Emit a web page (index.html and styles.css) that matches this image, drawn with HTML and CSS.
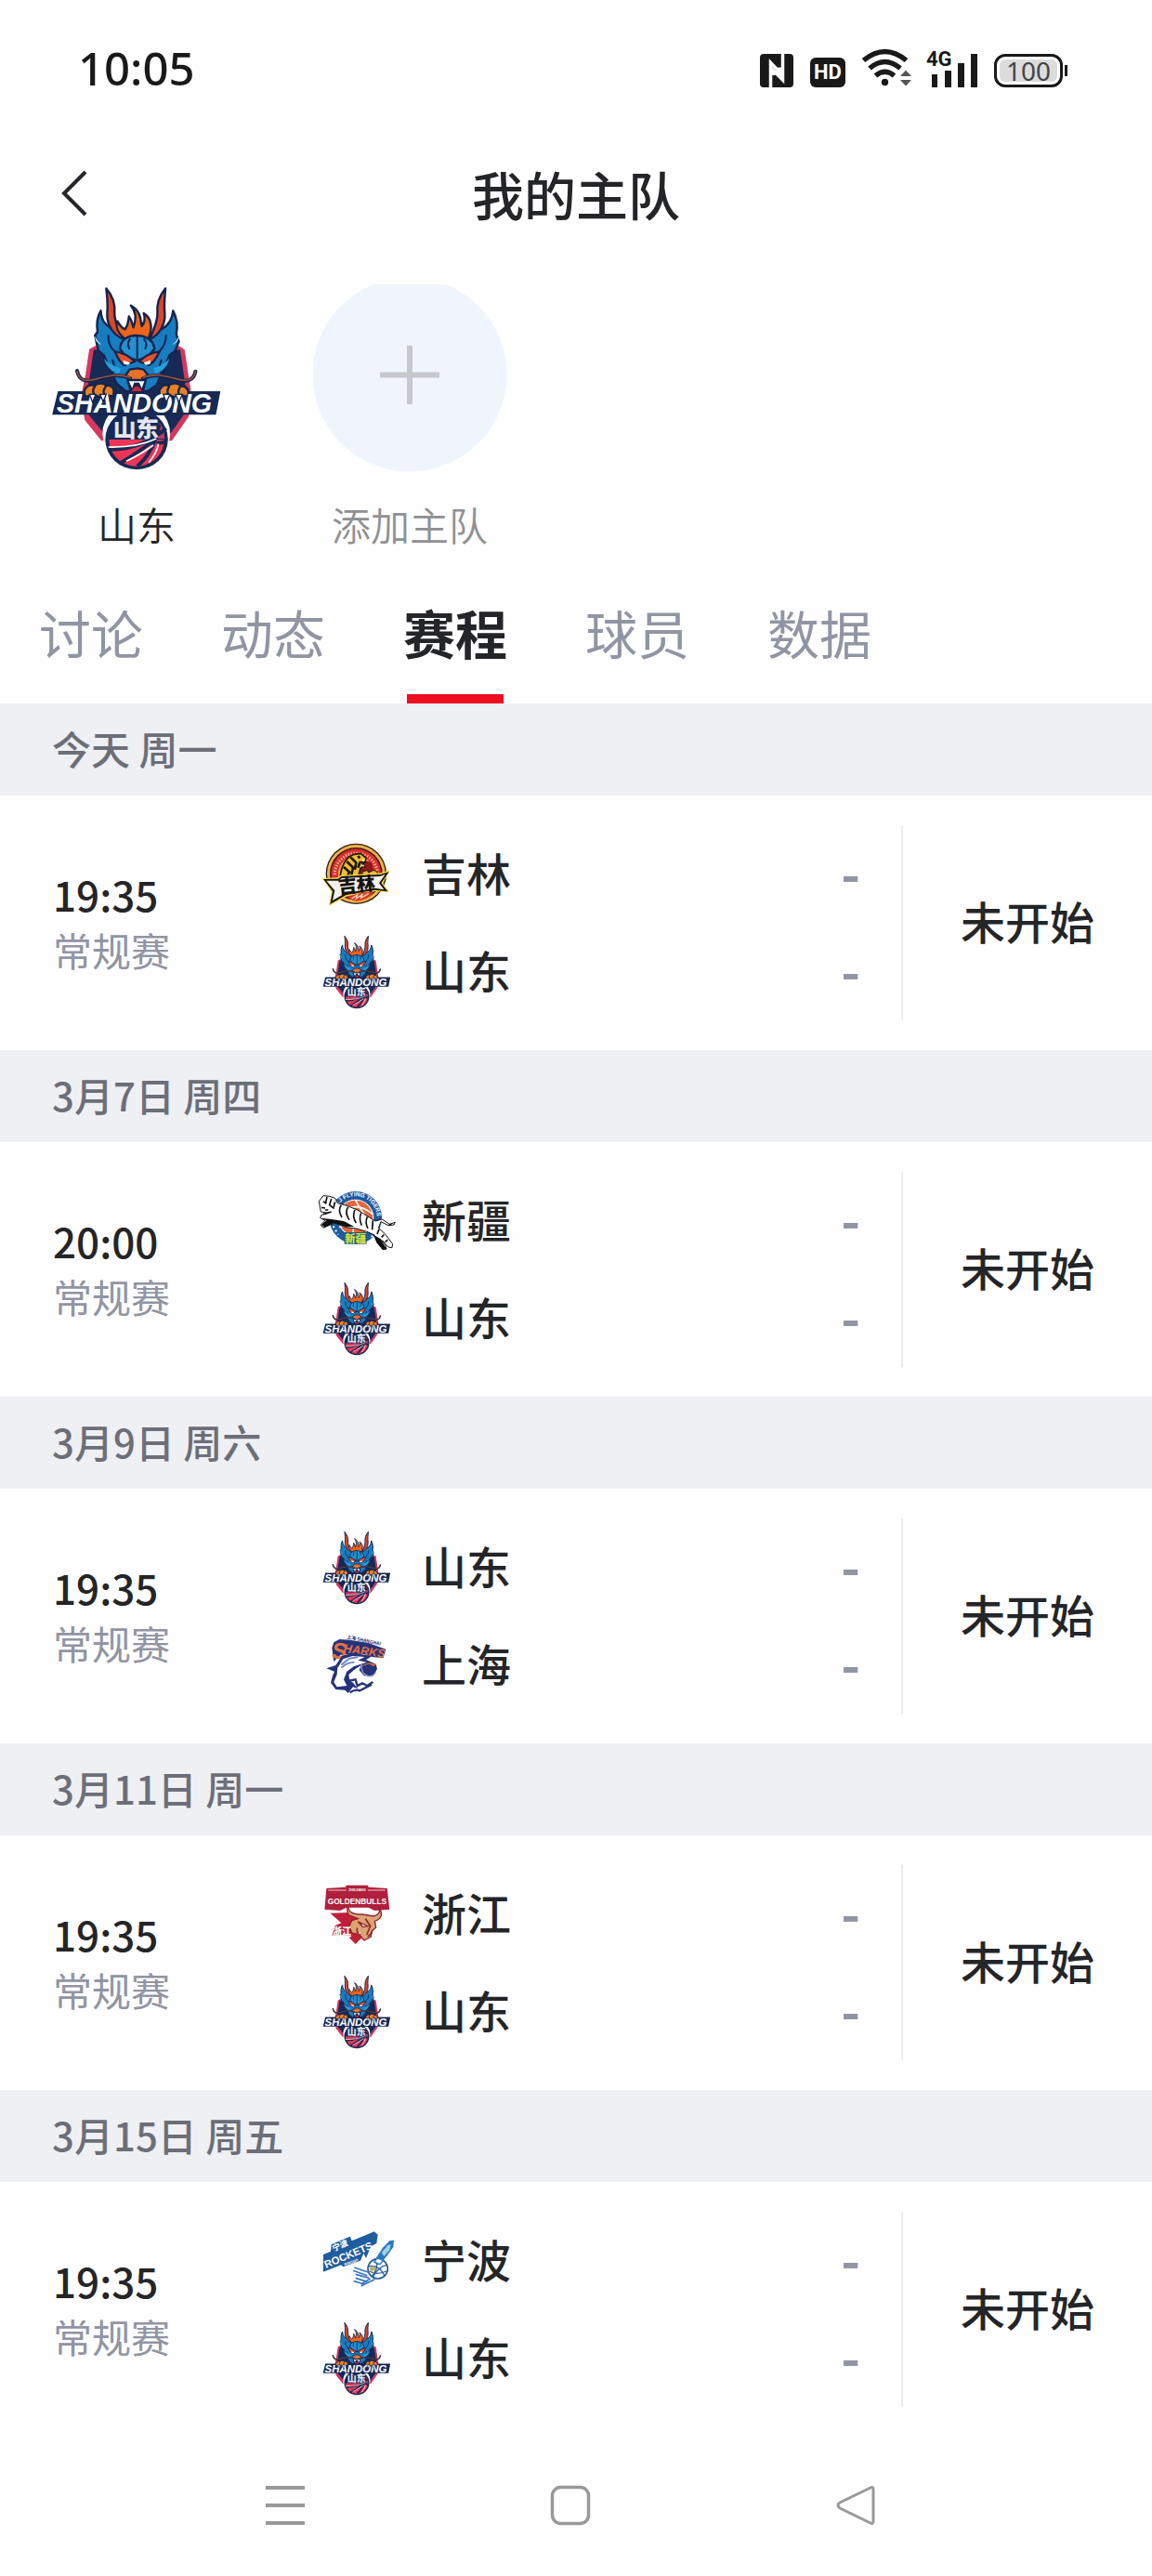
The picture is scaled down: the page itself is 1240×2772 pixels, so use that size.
FILE: index.html
```html
<!DOCTYPE html>
<html lang="zh-CN">
<head>
<meta charset="utf-8">
<meta name="viewport" content="width=device-width, initial-scale=1">
<title>我的主队</title>
<link rel="stylesheet" href="styles.css">
</head>
<body>
<svg class="sprite" aria-hidden="true">
  <symbol id="shandong" viewBox="23 35 630 630">
    <g transform="translate(-11 0) scale(1.033 1)">
    <path d="M190 256L208 246H470L488 258 500 340 512 420 500 475 448 552H228L176 485 164 410 178 340Z" fill="#d5375d"/>
    <path d="M204 258H474L486 340 496 420 484 470 444 528H236L190 470 180 410 192 340Z" fill="#162a55"/>
    <g stroke="#14244e" stroke-width="7" stroke-linejoin="round">
      <path d="M226 132C228 165 240 178 262 192L300 214H378L416 192C440 178 450 160 452 132C468 165 466 190 462 208L470 232 458 262 440 276 420 330 400 372 372 392H304L276 368 258 330 236 276 218 260 208 212 216 200C212 175 216 150 226 132Z" fill="#167dc0"/>
      <path d="M243 60C266 88 272 112 269 142C269 172 284 190 296 224C266 210 244 180 246 140C249 110 246 90 243 60Z" fill="#d94726"/>
      <path d="M428 60C406 88 400 112 403 142C403 172 390 190 380 224C408 210 428 180 426 140C423 110 426 90 428 60Z" fill="#d94726"/>
      <path d="M320 115C350 132 350 158 354 182C364 170 364 152 360 140C388 158 388 195 374 222H300C274 198 272 182 278 166C288 184 294 190 302 192C314 174 312 162 314 150C324 164 324 176 328 186C338 155 336 135 320 115Z" fill="#ee6418"/>
      <path d="M286 255C288 222 316 212 336 212C362 212 390 224 394 255L372 282 340 292 306 282Z" fill="#2490d0"/>
      <path d="M270 264C292 266 312 276 332 296L300 308C286 300 280 286 270 264ZM410 264C388 266 366 276 346 296L376 308C392 300 400 286 410 264Z" fill="#e4512d"/>
      <path d="M316 322L340 318 360 322 376 344 362 356H314L302 344Z" fill="#e8712a"/>
    </g>
    <path d="M340 214V286M318 222C308 236 310 246 316 256M360 222C372 236 370 246 364 256M250 210C248 236 256 250 268 262M430 210C430 236 422 250 410 262M262 290C272 310 270 325 260 342M416 290C406 310 408 325 418 342" fill="none" stroke="#14244e" stroke-width="6"/>
    <path d="M236 286C252 306 268 310 290 318L282 336C262 328 244 316 236 286ZM440 286C426 306 410 310 390 318L396 336C416 328 434 316 440 286Z" fill="#25a0df"/>
    <path d="M296 292L318 300 312 307 298 304ZM382 292L360 300 366 307 380 304Z" fill="#fff"/>
    <path d="M208 214C208 226 214 236 228 242L216 230ZM470 214C470 226 462 236 450 242L462 230Z" fill="#fff"/>
    <path d="M234 552A104 104 0 0 1 250 470H424A104 104 0 0 1 440 552Z" fill="#fff"/>
    <circle cx="338" cy="547" r="98" fill="#162a55"/>
    <path d="M252 548H424A86 86 0 0 1 394 614Q338 656 282 614A86 86 0 0 1 252 548Z" fill="#ec3554"/>
    <path d="M408 490Q424 512 426 545H404Z" fill="#c0386a"/>
    <path d="M252 580Q350 582 430 512M290 622Q360 580 400 540M340 634Q392 590 408 500M400 560L430 556" fill="none" stroke="#162a55" stroke-width="12"/>
    <path d="M250 572Q340 574 400 545M306 618Q360 590 390 566M376 622Q402 590 406 562" fill="none" stroke="#fff" stroke-width="5"/>
    <path d="M264 484H410L404 544H252Z" fill="#162a55"/>
    <path d="M92 392H178L196 400H480L494 392H600L586 468H74Z" fill="#162a55"/>
    <path d="M306 356H370L360 398H318Z" fill="#14244e"/>
    <path d="M314 360L324 382 330 364H346L354 382 362 360Z" fill="#fff"/>
    <path d="M322 392Q338 360 356 392Z" fill="#cf2739"/>
    <path d="M152 326C158 358 180 364 214 354C256 342 282 334 318 350M522 328C516 358 496 364 462 354C420 342 394 334 358 350" fill="none" stroke="#14244e" stroke-width="12" stroke-linecap="round"/>
    <path d="M152 328C158 358 180 362 214 352C256 340 282 334 318 348M522 328C516 358 496 362 462 352C420 340 394 334 358 348" fill="none" stroke="#9b5239" stroke-width="5" stroke-linecap="round"/>
    <g stroke="#14244e" stroke-width="7" fill="#e98125">
      <path d="M178 410C166 384 188 366 206 374C220 362 238 366 242 374C262 370 272 386 264 408L240 404 224 410 204 404Z"/>
      <path d="M412 408C402 386 420 366 438 374C452 362 470 366 476 376C494 372 506 392 496 410L474 404 454 410 434 402Z"/>
      <path d="M208 376C198 390 202 396 206 404M242 376C232 390 234 396 238 404M440 376C432 390 434 396 438 404M474 378C466 390 468 398 472 404" fill="none"/>
    </g>
    </g>
    <text x="80" y="462" class="mark-shandong">SHANDONG</text>
    <path d="M186 402L196 428 206 402ZM220 402L230 426 240 402ZM424 402L434 428 446 402ZM464 402L474 428 486 402Z" fill="#fff" stroke="#14244e" stroke-width="4"/>
    <text x="262" y="539" class="mark-shandong-cn">山东</text>
  </symbol>

  <symbol id="jilin" viewBox="66 24 252 252">
    <circle cx="190" cy="148" r="98" fill="#31200e"/>
    <circle cx="190" cy="148" r="94" fill="#efb14c"/>
    <circle cx="190" cy="148" r="85" fill="#2a170f"/>
    <circle cx="190" cy="148" r="81" fill="#dd2b2c"/>
    <path d="M121 150A69 69 0 0 1 259 150" fill="none" stroke="#f6c9a8" stroke-width="9" stroke-dasharray="4 5"/>
    <circle cx="190" cy="148" r="58" fill="#e8a83c"/>
    <path d="M192 96L240 112 250 150H196Z" fill="#8d1719"/>
    <path d="M138 164C140 128 156 94 180 86L204 82 222 96 218 112 208 110 216 124 204 130 194 166Z" fill="#eebf27" stroke="#1a130d" stroke-width="5"/>
    <path d="M150 126L168 142 158 164M160 108L180 128 172 164M172 94L190 112 186 134M196 90L202 98M204 108L196 128" fill="none" stroke="#1a130d" stroke-width="8"/>
    <path d="M208 103L220 101 214 108ZM208 122L214 118 216 125Z" fill="#fff"/>
    <path d="M210 142L226 136 230 144 246 136 256 140 262 152 210 156Z" fill="#e7b53b" stroke="#1a130d" stroke-width="3"/>
    <path d="M80 162L130 160 140 152 266 146 300 136 276 178 298 208 252 204 162 220 102 252 110 206Z" fill="#f1d83d"/>
    <path d="M84 165L132 164 142 156 268 150 296 142 271 178 292 205 250 200 158 216 106 246 114 204Z" fill="#17130e"/>
    <path d="M94 170L134 170 144 162 266 156 284 150 264 178 280 199 250 194 156 210 114 234 121 202Z" fill="#f4f1ea"/>
    <g transform="rotate(-6 190 190)"><text x="132" y="206" class="mark-jilin">吉林</text></g>
    <path d="M164 228Q190 206 226 208L246 206Q230 232 190 236Z" fill="#d93a28"/>
    <path d="M176 228L194 216 190 228 210 214 206 226 230 212" fill="none" stroke="#f8d7b2" stroke-width="4"/>
  </symbol>

  <symbol id="xinjiang" viewBox="66 36 252 252">
    <circle cx="188" cy="151" r="85" fill="#1e5a9e"/>
    <circle cx="188" cy="151" r="59" fill="#fff"/>
    <circle cx="188" cy="151" r="56" fill="#e4673a"/>
    <path d="M134 140Q186 92 244 140M188 94Q200 120 236 166M150 110Q190 124 180 200M136 182Q170 166 230 190" fill="none" stroke="#fff" stroke-width="5"/>
    <path id="xj-arc" d="M125 123A69 69 0 0 1 256 164" fill="none"/>
    <text class="mark-tigers"><textPath href="#xj-arc" startOffset="12">XJ FLYING TIGERS</textPath></text>
    <path d="M116 178L132 206M240 214L260 170" stroke="#d9e9f8" stroke-width="7" stroke-dasharray="6 9"/>
    <path d="M70 98L84 80 104 82 122 88 130 104 160 112 194 126 226 146 252 162 274 156 298 172 316 166 312 174 294 176 270 164 262 184 282 202 308 236 306 248 294 246 274 224 284 238 288 252 276 254 258 232 248 206 224 196 190 186 156 182 120 168 84 184 76 174 90 160 74 152 78 142 100 136 76 132Z" fill="#fff" stroke="#111" stroke-width="3"/>
    <path d="M76 152L110 156 150 162 184 180 156 180 118 168 88 182 78 174 94 160ZM246 206L270 220 288 252 276 254 256 230Z" fill="#101010"/>
    <path d="M96 84L92 102M84 98L94 106M110 90L104 110 114 118M78 118L90 120M122 100L116 122M142 110Q130 126 144 150M164 116Q152 136 168 158M186 126Q176 146 190 168M206 136Q198 154 208 176M226 148Q218 166 228 186M244 160L242 190M264 188L258 204M280 206L272 214M292 222L284 230M296 174L304 172M84 140L110 132M90 126L100 126" fill="none" stroke="#111" stroke-width="5"/>
    <path d="M152 198H224V236H152Z" fill="#1d5c86"/>
    <text x="154" y="230" class="mark-xinjiang">新疆</text>
  </symbol>

  <symbol id="shanghai" viewBox="66 360 252 252">
    <g transform="rotate(12 222 402)"><text x="160" y="412" class="mark-sh-small">上海 SHANGHAI</text></g>
    <path d="M118 474L112 430 118 412 136 402 170 404 230 414 286 434 278 462 246 460 216 450 170 450 140 452Z" fill="#26327a"/>
    <text x="112" y="466" class="mark-sharks-s">S</text>
    <g transform="translate(148 443) rotate(8)"><text x="0" y="0" class="mark-sharks">HARKS</text></g>
    <path d="M94 496L124 486 144 456 178 446 242 456 222 468 254 482 258 498 244 522 216 520 200 502 206 486 184 500 162 520 162 534 178 540 196 562 180 556 164 576 154 566 124 564 108 542 114 520 120 506Z" fill="#26327a"/>
    <path d="M130 494L148 466 178 456 218 459 196 470 224 476 182 490 160 506 150 532 160 552 128 556 118 540 128 516Z" fill="#fff"/>
    <path d="M142 484L168 464 196 460M142 494Q160 476 184 476" fill="none" stroke="#7a8ec2" stroke-width="6"/>
    <path d="M208 490Q226 470 254 484L246 490Q226 482 208 490Z" fill="#df693c"/>
    <circle cx="230" cy="500" r="18" fill="#26327a"/>
    <path d="M208 482Q202 512 230 522Q246 522 254 508" fill="none" stroke="#9aa8d6" stroke-width="4"/>
    <path d="M162 514L166 536 188 532 194 552 210 544 226 552 244 540M170 574Q188 562 202 568L240 548" fill="none" stroke="#26327a" stroke-width="7"/>
  </symbol>

  <symbol id="zhejiang" viewBox="66 24 252 252">
    <path d="M94 66L156 62 158 56H228L230 62 290 66 298 134 250 138 230 128 160 128 138 138 88 134Z" fill="#b0203c"/>
    <path d="M100 72H158M228 72H284" stroke="#f0c7ca" stroke-width="3"/>
    <text x="166" y="75" class="mark-zj-small">ZHEJIANG</text>
    <text x="98" y="118" class="mark-bulls">GOLDENBULLS</text>
    <path d="M106 146L170 144 194 150 254 178 240 214 206 228 188 246 168 226 176 220 140 216 112 218 122 186 142 178Z" fill="#c01f38"/>
    <path d="M164 122C164 144 180 150 210 150L246 156C266 150 270 138 262 126C278 148 274 164 250 172L254 192 240 204 238 222 216 234 206 222 196 214 176 210 168 188 176 170 196 164 166 152C158 140 160 132 164 122Z" fill="#dba574" stroke="#91232d" stroke-width="4"/>
    <path d="M196 174L226 188 212 190ZM220 164L236 188 224 216M194 194Q188 210 206 214M228 222L242 208" fill="none" stroke="#91232d" stroke-width="5"/>
    <path d="M208 180L222 188 212 188ZM206 160L216 166M200 206L208 212 198 212Z" fill="#fff"/>
    <text x="114" y="217" class="mark-zhejiang">浙江</text>
  </symbol>

  <symbol id="ningbo" viewBox="66 33 252 252">
    <path d="M84 138L108 128 110 106 170 80 176 94 224 74 248 64 260 74 256 102 238 112 222 150 214 134 204 158 148 178 142 172 84 194Z" fill="#1f5d9f"/>
    <g transform="translate(93 183) rotate(-23)"><text x="0" y="0" class="mark-rockets">ROCKETS</text></g>
    <g transform="translate(118 128) rotate(-23)"><text x="0" y="0" class="mark-ningbo">宁波</text></g>
    <g transform="translate(153 175) rotate(-20)"><text x="0" y="0" class="mark-nb-small">NINGBO</text></g>
    <circle cx="260" cy="184" r="32" fill="#fff" stroke="#2d5f9c" stroke-width="5"/>
    <path d="M230 176Q266 170 282 208M256 152Q262 190 240 208M290 172Q262 176 244 212M232 192Q256 206 288 192" fill="none" stroke="#2d5f9c" stroke-width="4"/>
    <path d="M254 150L276 116 298 94 312 92 310 114 290 142 266 172 246 164Z" fill="#2a78bf"/>
    <path d="M272 132L292 108 302 106 298 124 280 144Z" fill="#9fd0ee"/>
    <path d="M258 150L278 158 266 170 250 162Z" fill="#fff" stroke="#2a78bf" stroke-width="4"/>
    <path d="M232 178L256 180 238 200Z" fill="#b8b35f"/>
    <path d="M184 180L230 196M180 190L226 206M188 202L232 214M188 214L226 226M182 224L216 234M206 234L236 216M206 240L250 218" stroke="#3b76c0" stroke-width="5"/>
  </symbol>
</svg>

<div class="screen">
  <div class="status-bar">
    <span class="clock">10:05</span>
    <div class="status-icons">
      <svg width="36" height="36" viewBox="0 0 36 36" role="img" aria-label="NFC"><rect width="36" height="36" rx="4" fill="#191919"/><path d="M11.500 36V9.500L21 19.500V14.500M24.500 0V28L14.500 18V23" fill="none" stroke="#fff" stroke-width="3.500"/></svg>
      <span class="hd">HD</span>
      <svg class="wifi" width="54" height="42" viewBox="0 0 54 42" role="img" aria-label="Wi-Fi"><g fill="none" stroke="#191919" stroke-width="5.500"><path d="M1.500 13Q24.500-6 47.500 13"/><path d="M8 21.500Q24.500 7.500 41 21.500"/><path d="M14.500 29.500Q24.500 21 34.500 29.500"/></g><circle cx="24.500" cy="36.500" r="3.700" fill="#191919"/><path d="M41 30L47 23.500 53 30ZM41 34H53L47 40.500Z" fill="#555"/></svg>
      <div class="signal">
        <span class="net">4G</span>
        <svg width="50" height="36" viewBox="0 0 50 36" aria-hidden="true"><path d="M1 22h6v14H1zM15 18h7v18h-7zM29 10h7v26h-7zM43 0h7v36h-7z" fill="#191919"/></svg>
      </div>
      <div class="battery"><span class="level">100</span></div>
    </div>
  </div>

  <header class="title-bar">
    <button class="back" type="button" aria-label="返回"><svg width="32" height="52" viewBox="0 0 32 52"><path d="M28 3L5 26L28 49" fill="none" stroke="#26272b" stroke-width="4"/></svg></button>
    <h1>我的主队</h1>
  </header>

  <div class="my-teams">
    <button class="my-team" type="button"><svg class="my-logo"><use href="#shandong"/></svg><span>山东</span></button>
    <button class="my-team add" type="button"><svg class="my-logo" viewBox="0 0 210 210"><path d="M66 4H144A104.500 104.500 0 1 1 66 4Z" fill="#f0f4fd"/><path d="M73 101.500H137M105 70V133" stroke="#c6c8ce" stroke-width="6"/></svg><span>添加主队</span></button>
  </div>

  <nav class="tabs">
    <a href="#discuss">讨论</a>
    <a href="#news">动态</a>
    <a href="#schedule" class="active" aria-current="page">赛程</a>
    <a href="#players">球员</a>
    <a href="#stats">数据</a>
  </nav>

  <main id="schedule">
    <section>
      <h2>今天 周一</h2>
      <article class="game">
        <div class="when"><time>19:35</time><span>常规赛</span></div>
        <div class="sides">
          <div class="side"><svg class="logo"><use href="#jilin"/></svg><span class="name">吉林</span><span class="score">-</span></div>
          <div class="side"><svg class="logo"><use href="#shandong"/></svg><span class="name">山东</span><span class="score">-</span></div>
        </div>
        <div class="state">未开始</div>
      </article>
    </section>
    <section>
      <h2>3月7日 周四</h2>
      <article class="game">
        <div class="when"><time>20:00</time><span>常规赛</span></div>
        <div class="sides">
          <div class="side"><svg class="logo"><use href="#xinjiang"/></svg><span class="name">新疆</span><span class="score">-</span></div>
          <div class="side"><svg class="logo"><use href="#shandong"/></svg><span class="name">山东</span><span class="score">-</span></div>
        </div>
        <div class="state">未开始</div>
      </article>
    </section>
    <section>
      <h2>3月9日 周六</h2>
      <article class="game">
        <div class="when"><time>19:35</time><span>常规赛</span></div>
        <div class="sides">
          <div class="side"><svg class="logo"><use href="#shandong"/></svg><span class="name">山东</span><span class="score">-</span></div>
          <div class="side"><svg class="logo"><use href="#shanghai"/></svg><span class="name">上海</span><span class="score">-</span></div>
        </div>
        <div class="state">未开始</div>
      </article>
    </section>
    <section>
      <h2>3月11日 周一</h2>
      <article class="game">
        <div class="when"><time>19:35</time><span>常规赛</span></div>
        <div class="sides">
          <div class="side"><svg class="logo"><use href="#zhejiang"/></svg><span class="name">浙江</span><span class="score">-</span></div>
          <div class="side"><svg class="logo"><use href="#shandong"/></svg><span class="name">山东</span><span class="score">-</span></div>
        </div>
        <div class="state">未开始</div>
      </article>
    </section>
    <section>
      <h2>3月15日 周五</h2>
      <article class="game">
        <div class="when"><time>19:35</time><span>常规赛</span></div>
        <div class="sides">
          <div class="side"><svg class="logo"><use href="#ningbo"/></svg><span class="name">宁波</span><span class="score">-</span></div>
          <div class="side"><svg class="logo"><use href="#shandong"/></svg><span class="name">山东</span><span class="score">-</span></div>
        </div>
        <div class="state">未开始</div>
      </article>
    </section>
  </main>

  <div class="system-nav">
    <button type="button" aria-label="最近任务"><svg width="44" height="44" viewBox="0 0 44 44"><path d="M1 3H43M1 22H43M1 41H43" stroke="#999" stroke-width="4"/></svg></button>
    <button type="button" aria-label="主屏幕"><svg width="44" height="44" viewBox="0 0 44 44"><rect x="2.500" y="2.500" width="39" height="39" rx="9" fill="none" stroke="#999" stroke-width="3.500"/></svg></button>
    <button type="button" aria-label="返回"><svg width="44" height="44" viewBox="0 0 44 44"><path d="M38 3Q41 1.500 41 5V39Q41 42.500 38 41L5 25Q1 22 5 19Z" fill="none" stroke="#999" stroke-width="3"/></svg></button>
  </div>
</div>
</body>
</html>
```
FILE: styles.css
```css
* { box-sizing: border-box; }

body {
  margin: 0;
  background: #fefefe;
  color: #242528;
  font-family: "Noto Sans CJK SC", "Noto Sans", sans-serif;
}

button {
  padding: 0;
  border: 0;
  background: none;
  font: inherit;
  color: inherit;
}

svg { display: block; }

.sprite { display: none; }

.screen {
  display: flex;
  flex-direction: column;
  min-height: 100vh;
}

/* Phone status bar */
.status-bar {
  display: flex;
  align-items: center;
  justify-content: space-between;
  height: 120px;
  padding: 26px 96px 0 84px;
}

.clock {
  font: 500 49px/60px "Noto Sans", sans-serif;
  color: #191919;
}

.status-icons {
  display: flex;
  align-items: flex-end;
  gap: 18px;
}

.hd {
  width: 38px;
  border-radius: 6px;
  background: #191919;
  color: #fff;
  font: 700 22px/32px Roboto, sans-serif;
  text-align: center;
}

.signal {
  position: relative;
  padding-left: 2px;
}

.net {
  position: absolute;
  left: -3px;
  top: -5px;
  font: 700 22px/22px Roboto, sans-serif;
  color: #191919;
}

.battery {
  position: relative;
  width: 74px;
  padding: 3px;
  border: 3px solid #191919;
  border-radius: 12px;
}

.battery::after {
  content: "";
  position: absolute;
  right: -8px;
  top: 9px;
  width: 3px;
  height: 12px;
  background: #191919;
}

.level {
  display: block;
  border-radius: 6px;
  background: #dcdcdc;
  color: #444;
  font: 400 28px/24px "Noto Sans", sans-serif;
  text-align: center;
}

/* Page title */
.title-bar {
  display: grid;
  grid-template-columns: 1fr auto 1fr;
  align-items: center;
  height: 180px;
  padding: 0 64px 4px;
}

h1 {
  margin: 0;
  font-size: 56px;
  font-weight: 500;
  line-height: 80px;
}

/* Followed teams */
.my-teams {
  display: flex;
  gap: 84px;
  padding: 2px 42px 33px;
}

.my-team {
  width: 210px;
  font-size: 42px;
  font-weight: 350;
  line-height: 60px;
}

.my-logo {
  width: 210px;
  height: 210px;
  margin-bottom: 22px;
}

.add { color: #8f9093; }

.tabs {
  display: flex;
  gap: 84px;
  padding: 0 42px;
}

.tabs a {
  height: 130px;
  color: #9195a3;
  font-size: 56px;
  line-height: 106px;
  text-decoration: none;
}

.tabs .active {
  color: #242528;
  font-weight: 700;
}

.tabs .active::after {
  content: "";
  display: block;
  height: 10px;
  margin: 14px 4px 0;
  background: #ed0e1f;
}

/* Schedule */
h2 {
  margin: 0;
  padding: 0 56px 4px;
  background: #eff0f4;
  color: #6c6f79;
  font-size: 42px;
  font-weight: 500;
  line-height: 95px;
}

.game {
  display: flex;
  padding: 32px 0;
}

.when {
  display: flex;
  flex-direction: column;
  justify-content: center;
  width: 342px;
  padding: 0 0 2px 57px;
  color: #9195a3;
  font-size: 42px;
  line-height: 60px;
}

.when time {
  color: #242528;
  font-size: 44px;
  font-weight: 500;
}

.sides {
  flex: 1;
  padding-right: 44px;
  border-right: 2px solid #ececef;
}

.side {
  display: flex;
  align-items: center;
  height: 105px;
}

.logo {
  width: 84px;
  height: 84px;
}

.name {
  flex: 1;
  padding: 0 0 6px 28px;
  font-size: 48px;
  font-weight: 500;
}

.score {
  padding-bottom: 6px;
  color: #9195a3;
  font-size: 56px;
  font-weight: 700;
}

.state {
  display: flex;
  align-items: center;
  justify-content: center;
  width: 268px;
  padding-bottom: 6px;
  font-size: 48px;
  font-weight: 500;
}

/* Phone navigation */
.system-nav {
  display: flex;
  flex: 1;
  align-items: center;
  justify-content: space-around;
  padding: 0 166px 2px 154px;
}

/* Wordmarks inside the club logos */
.mark-shandong { font: italic 700 86px "Liberation Sans", sans-serif; fill: #fff; }
.mark-shandong-cn { font: 900 74px "Noto Sans CJK SC", sans-serif; fill: #e4e6f0; }
.mark-jilin { font: 900 60px "Noto Sans CJK SC", sans-serif; fill: #17130e; }
.mark-tigers { font: 700 19px "Liberation Sans", sans-serif; fill: #fff; }
.mark-xinjiang { font: 900 34px "Noto Sans CJK SC", sans-serif; fill: #d8e33c; }
.mark-sh-small { font: 700 15px "Noto Sans CJK SC", sans-serif; fill: #26327a; }
.mark-sharks-s { font: italic 700 72px "Liberation Sans", sans-serif; fill: #e9703f; }
.mark-sharks { font: italic 700 38px "Liberation Sans", sans-serif; fill: #e9703f; }
.mark-zj-small { font: 700 11px "Liberation Sans", sans-serif; fill: #fff; }
.mark-bulls { font: 700 25px "Liberation Sans", sans-serif; fill: #fff; }
.mark-zhejiang { font: 900 30px "Noto Sans CJK SC", sans-serif; fill: #fff; }
.mark-rockets { font: 700 34px "Liberation Sans", sans-serif; fill: #fff; }
.mark-ningbo { font: 900 26px "Noto Sans CJK SC", sans-serif; fill: #fff; }
.mark-nb-small { font: 700 12px "Liberation Sans", sans-serif; fill: #fff; }
```
